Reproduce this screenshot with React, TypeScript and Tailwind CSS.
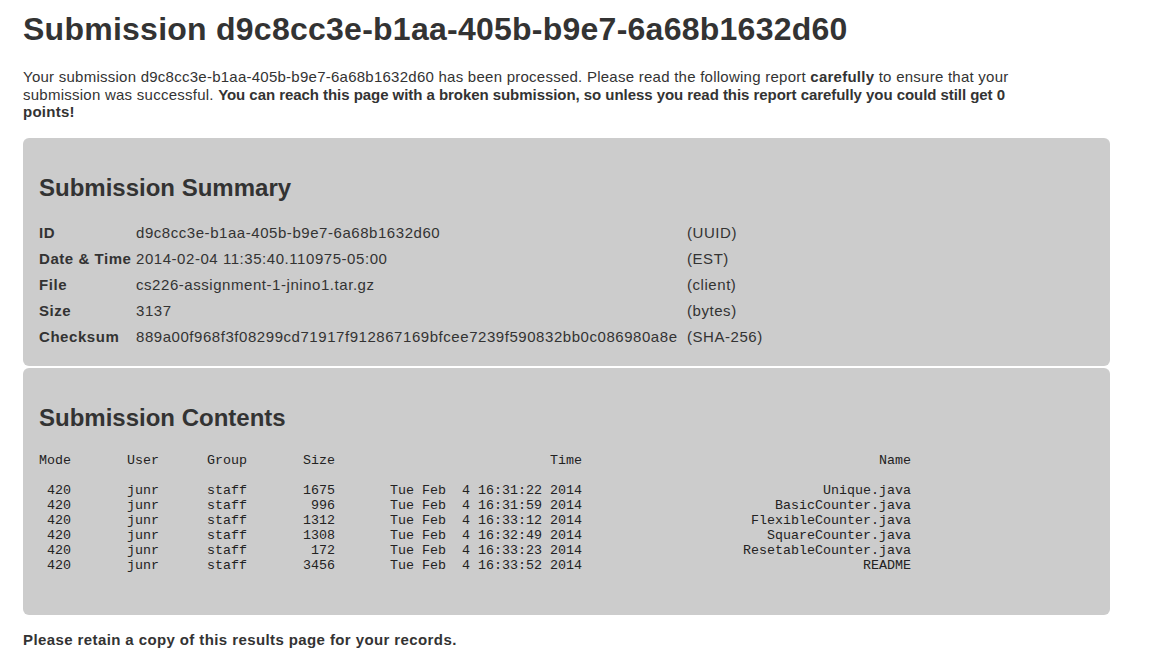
const SUBMISSION_ID = 'd9c8cc3e-b1aa-405b-b9e7-6a68b1632d60'

const summary = [
  { label: 'ID', value: SUBMISSION_ID, note: '(UUID)' },
  { label: 'Date & Time', value: '2014-02-04 11:35:40.110975-05:00', note: '(EST)' },
  { label: 'File', value: 'cs226-assignment-1-jnino1.tar.gz', note: '(client)' },
  { label: 'Size', value: '3137', note: '(bytes)' },
  { label: 'Checksum', value: '889a00f968f3f08299cd71917f912867169bfcee7239f590832bb0c086980a8e', note: '(SHA-256)' }
]

const files = [
  { mode: '420', user: 'junr', group: 'staff', size: '1675', time: 'Tue Feb  4 16:31:22 2014', name: 'Unique.java' },
  { mode: '420', user: 'junr', group: 'staff', size: '996', time: 'Tue Feb  4 16:31:59 2014', name: 'BasicCounter.java' },
  { mode: '420', user: 'junr', group: 'staff', size: '1312', time: 'Tue Feb  4 16:33:12 2014', name: 'FlexibleCounter.java' },
  { mode: '420', user: 'junr', group: 'staff', size: '1308', time: 'Tue Feb  4 16:32:49 2014', name: 'SquareCounter.java' },
  { mode: '420', user: 'junr', group: 'staff', size: '172', time: 'Tue Feb  4 16:33:23 2014', name: 'ResetableCounter.java' },
  { mode: '420', user: 'junr', group: 'staff', size: '3456', time: 'Tue Feb  4 16:33:52 2014', name: 'README' }
]

const cols = 'grid grid-cols-[32px_136px_96px_32px_247px_329px] h-[15px] leading-[15px] whitespace-pre'

export default function App() {
  return (
    <div className="min-h-screen bg-white text-[#333] font-['Liberation_Sans',Arial,sans-serif]">
      <div className="w-[1110px] pl-[23px] pt-[11px]">
        <h1 className="text-[32px] leading-[36px] font-bold tracking-[0.25px]">Submission {SUBMISSION_ID}</h1>

        <p className="mt-[21px] text-[15px] leading-[17.5px] tracking-[0.25px]">
          Your submission {SUBMISSION_ID} has been processed. Please read the following report <b>carefully</b> to ensure that your
          <br />
          submission was successful. <b className="tracking-[-0.05px]">You can reach this page with a broken submission, so unless you read this report carefully you could still get 0</b>
          <br />
          <b>points!</b>
        </p>

        {/* Summary */}
        <section className="mt-[17px] rounded-[6px] bg-[#cccccc] pl-4 pt-[36px] pb-[15px]">
          <h2 className="text-[24px] leading-[28px] font-bold">Submission Summary</h2>
          <div className="mt-[19px] text-[15px] tracking-[0.55px]">
            {summary.map(row => (
              <div key={row.label} className="grid grid-cols-[97px_551px_auto] h-[26px] items-center">
                <span className="font-bold whitespace-nowrap">{row.label}</span>
                <span>{row.value}</span>
                <span>{row.note}</span>
              </div>
            ))}
          </div>
        </section>

        {/* Contents */}
        <section className="mt-[2px] rounded-[6px] bg-[#cccccc] pl-4 pt-[36px] pb-[42px]">
          <h2 className="text-[24px] leading-[28px] font-bold">Submission Contents</h2>
          <div className="mt-[21px] font-['Liberation_Mono','Courier_New',monospace] text-[13.33px] text-[#222]">
            <div className={cols}>
              <span className="text-right">Mode</span>
              <span className="pl-[56px]">User</span>
              <span>Group</span>
              <span className="text-right">Size</span>
              <span className="text-right">Time</span>
              <span className="text-right">Name</span>
            </div>
            <div className="h-[15px]" />
            {files.map(f => (
              <div key={f.name} className={cols}>
                <span className="text-right">{f.mode}</span>
                <span className="pl-[56px]">{f.user}</span>
                <span>{f.group}</span>
                <span className="text-right">{f.size}</span>
                <span className="text-right">{f.time}</span>
                <span className="text-right">{f.name}</span>
              </div>
            ))}
          </div>
        </section>

        <p className="mt-4 text-[15px] leading-[17.5px] font-bold tracking-[0.4px]">Please retain a copy of this results page for your records.</p>
      </div>
    </div>
  )
}
